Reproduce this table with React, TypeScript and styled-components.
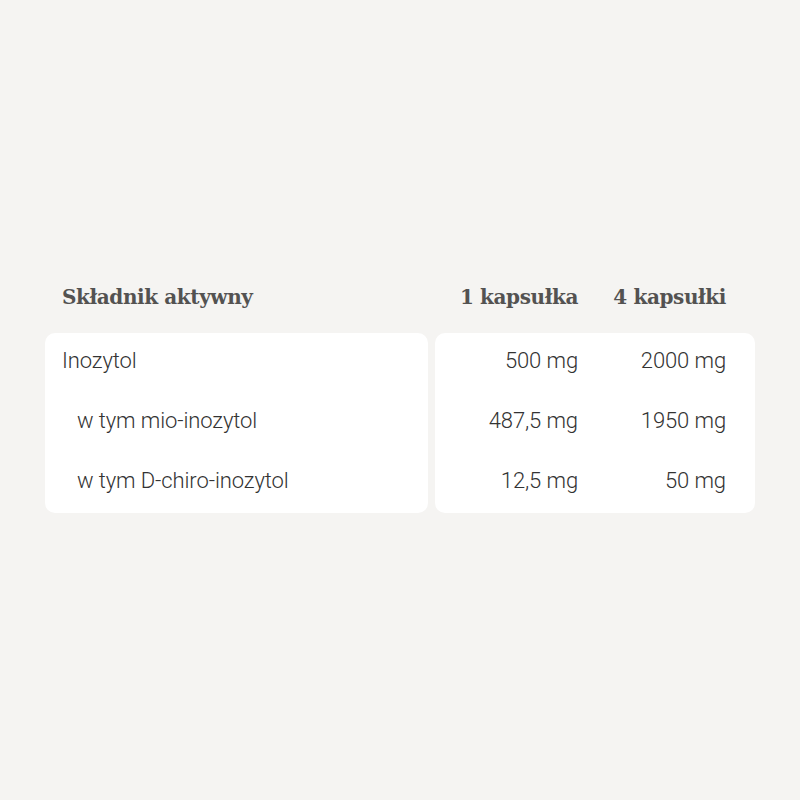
import React from 'react';
import styled, { createGlobalStyle } from 'styled-components';

interface Row {
  name: string;
  sub?: boolean;
  one: string;
  four: string;
}

const rows: Row[] = [
  { name: 'Inozytol', one: '500 mg', four: '2000 mg' },
  { name: 'w tym mio-inozytol', sub: true, one: '487,5 mg', four: '1950 mg' },
  { name: 'w tym D-chiro-inozytol', sub: true, one: '12,5 mg', four: '50 mg' },
];

const GlobalStyle = createGlobalStyle`
  html, body {
    margin: 0;
    padding: 0;
    background: #f5f4f2;
  }
  body {
    font-family: Roboto, 'Liberation Sans', sans-serif;
  }
`;

const Page = styled.div`
  width: 800px;
  height: 800px;
  box-sizing: border-box;
  padding: 272px 45px 0;
`;

const Table = styled.div`
  display: grid;
  grid-template-columns: 383px 320px;
  column-gap: 7px;
  row-gap: 11px;
`;

const HeadLeft = styled.div`
  height: 50px;
  display: flex;
  align-items: center;
  padding-left: 17px;
`;

const HeadRight = styled.div`
  height: 50px;
  display: grid;
  grid-template-columns: 148px 148px;
  justify-content: end;
  padding-right: 29px;
  align-items: center;
`;

const HeadText = styled.div<{ $right?: boolean }>`
  font-family: 'DejaVu Serif', 'Liberation Serif', serif;
  font-weight: 700;
  font-size: 20px;
  letter-spacing: -0.4px;
  color: #535251;
  text-align: ${p => (p.$right ? 'right' : 'left')};
`;

const Card = styled.div`
  background: #ffffff;
  border-radius: 10px;
`;

const NameRow = styled.div<{ $sub?: boolean }>`
  height: 60px;
  box-sizing: border-box;
  padding-bottom: 6px;
  display: flex;
  align-items: center;
  padding-left: ${p => (p.$sub ? '32px' : '17px')};
  font-weight: 300;
  font-size: 22px;
  color: #333333;
  letter-spacing: -0.1px;
`;

const ValueRow = styled.div`
  height: 60px;
  box-sizing: border-box;
  padding-bottom: 6px;
  display: grid;
  grid-template-columns: 148px 148px;
  justify-content: end;
  padding-right: 29px;
  align-items: center;
`;

const Value = styled.div`
  text-align: right;
  font-weight: 300;
  font-size: 22px;
  color: #333333;
  letter-spacing: -0.1px;
`;

export default function App() {
  return (
    <Page>
      <GlobalStyle />
      <Table>
        <HeadLeft>
          <HeadText>Składnik aktywny</HeadText>
        </HeadLeft>
        <HeadRight>
          <HeadText $right>1 kapsułka</HeadText>
          <HeadText $right>4 kapsułki</HeadText>
        </HeadRight>
        <Card>
          {rows.map(r => (
            <NameRow key={r.name} $sub={r.sub}>
              {r.name}
            </NameRow>
          ))}
        </Card>
        <Card>
          {rows.map(r => (
            <ValueRow key={r.name}>
              <Value>{r.one}</Value>
              <Value>{r.four}</Value>
            </ValueRow>
          ))}
        </Card>
      </Table>
    </Page>
  );
}
